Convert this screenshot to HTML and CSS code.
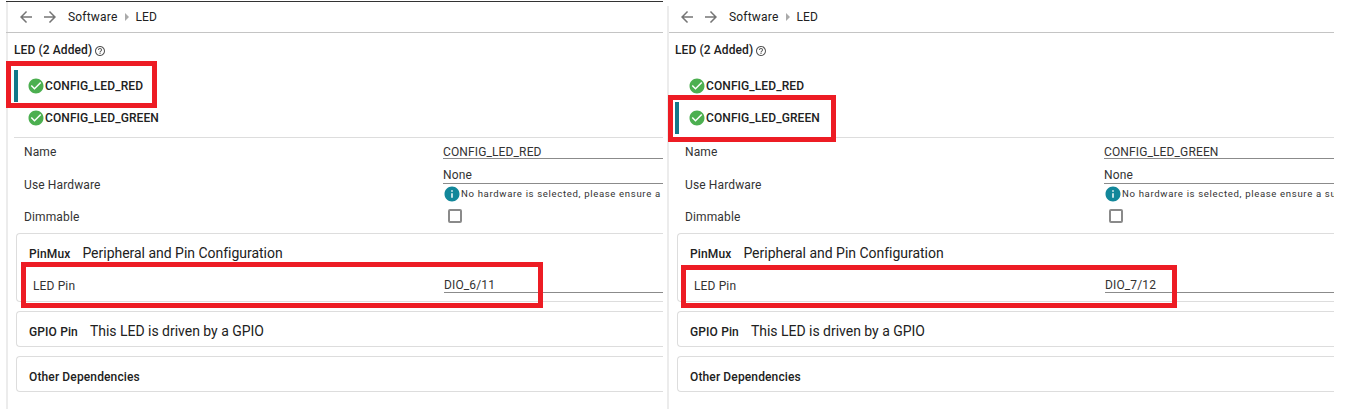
FILE: index.html
```html
<!DOCTYPE html>
<html lang="en">
<head>
<meta charset="utf-8">
<title>LED configuration</title>
<link rel="stylesheet" href="styles.css">
</head>
<body>
<svg class="defs" width="0" height="0">
  <symbol id="back" viewBox="0 0 24 24"><path d="M20 11H7.83l5.59-5.59L12 4l-8 8 8 8 1.41-1.41L7.83 13H20v-2z"/></symbol>
  <symbol id="forward" viewBox="0 0 24 24"><path d="M12 4l-1.41 1.41L16.17 11H4v2h12.17l-5.58 5.59L12 20l8-8z"/></symbol>
  <symbol id="help" viewBox="0 0 24 24"><path d="M11 18h2v-2h-2v2zm1-16C6.48 2 2 6.48 2 12s4.48 10 10 10 10-4.48 10-10S17.52 2 12 2zm0 18c-4.41 0-8-3.59-8-8s3.59-8 8-8 8 3.590 8 8-3.590 8-8 8zm0-14c-2.210 0-4 1.790-4 4h2c0-1.100.9-2 2-2s2 .9 2 2c0 2-3 1.750-3 5h2c0-2.250 3-2.500 3-5 0-2.210-1.790-4-4-4z"/></symbol>
  <symbol id="check" viewBox="0 0 24 24"><path d="M12 2C6.480 2 2 6.480 2 12s4.480 10 10 10 10-4.480 10-10S17.520 2 12 2zm-2 15l-5-5 1.410-1.410L10 14.170l7.590-7.590L19 8l-9 9z"/></symbol>
  <symbol id="info" viewBox="0 0 24 24"><path d="M12 2C6.480 2 2 6.480 2 12s4.480 10 10 10 10-4.480 10-10S17.520 2 12 2zm1 15h-2v-6h2v6zm0-8h-2V7h2v2z"/></symbol>
</svg>
<main class="board">
  <section class="panel panel-left">
    <header class="crumbs">
      <svg class="arrow"><use href="#back"/></svg><svg class="arrow"><use href="#forward"/></svg>
      <span class="crumb">Software</span><i class="sep"></i><span>LED</span>
    </header>
    <h1 class="title"><span>LED (2 Added)</span><svg class="help"><use href="#help"/></svg></h1>
    <ul class="instances">
      <li class="instance selected"><svg class="check"><use href="#check"/></svg><span>CONFIG_LED_RED</span></li>
      <li class="instance"><svg class="check"><use href="#check"/></svg><span>CONFIG_LED_GREEN</span></li>
    </ul>
    <div class="form">
      <div class="row row-name"><label>Name</label><div class="field">CONFIG_LED_RED</div></div>
      <div class="row row-hw"><label>Use Hardware</label><div class="stack"><div class="field">None</div><div class="note"><svg class="info"><use href="#info"/></svg><span>No hardware is selected, please ensure a</span></div></div></div>
      <div class="row row-dim"><label>Dimmable</label><span class="box"></span></div>
    </div>
    <div class="cards">
      <article class="card card-pin"><div class="head"><b>PinMux</b><span class="desc">Peripheral and Pin Configuration</span></div>
        <div class="pin"><label>LED Pin</label><div class="field">DIO_6/11</div></div></article>
      <article class="card"><div class="head"><b>GPIO Pin</b><span class="desc">This LED is driven by a GPIO</span></div></article>
      <article class="card"><div class="head"><b>Other Dependencies</b></div></article>
    </div>
  </section>
  <section class="panel panel-right">
    <header class="crumbs">
      <svg class="arrow"><use href="#back"/></svg><svg class="arrow"><use href="#forward"/></svg>
      <span class="crumb">Software</span><i class="sep"></i><span>LED</span>
    </header>
    <h1 class="title"><span>LED (2 Added)</span><svg class="help"><use href="#help"/></svg></h1>
    <ul class="instances">
      <li class="instance"><svg class="check"><use href="#check"/></svg><span>CONFIG_LED_RED</span></li>
      <li class="instance selected"><svg class="check"><use href="#check"/></svg><span>CONFIG_LED_GREEN</span></li>
    </ul>
    <div class="form">
      <div class="row row-name"><label>Name</label><div class="field">CONFIG_LED_GREEN</div></div>
      <div class="row row-hw"><label>Use Hardware</label><div class="stack"><div class="field">None</div><div class="note"><svg class="info"><use href="#info"/></svg><span>No hardware is selected, please ensure a su</span></div></div></div>
      <div class="row row-dim"><label>Dimmable</label><span class="box"></span></div>
    </div>
    <div class="cards">
      <article class="card card-pin"><div class="head"><b>PinMux</b><span class="desc">Peripheral and Pin Configuration</span></div>
        <div class="pin"><label>LED Pin</label><div class="field">DIO_7/12</div></div></article>
      <article class="card"><div class="head"><b>GPIO Pin</b><span class="desc">This LED is driven by a GPIO</span></div></article>
      <article class="card"><div class="head"><b>Other Dependencies</b></div></article>
    </div>
  </section>
  <div class="mark mark-red"></div>
  <div class="mark mark-pin6"></div>
  <div class="mark mark-green"></div>
  <div class="mark mark-pin7"></div>
</main>
</body>
</html>
```
FILE: styles.css
```css
* { box-sizing: border-box; }
body { margin: 0; background: #fff; color: #212121; font: 12px/16px Roboto, sans-serif; letter-spacing: .13px; }
svg { display: block; flex: none; fill: currentColor; }
.defs { position: absolute; }
.board { position: relative; display: flex; gap: 4px; height: 419px; padding-left: 6px; overflow: hidden; }
.panel { height: 409px; padding-left: 2px; overflow: hidden; background: linear-gradient(#ececec, #ececec) 0 6px / 2px 100% no-repeat; white-space: nowrap; }
.panel-left { width: 657px; border-top: 1px solid #fff; background-position: 0 0; }
.panel-left .crumbs { height: 32px; margin-left: -2px; padding: 0 0 0 11px; border-top: 1px solid #333; }
.panel-right { width: 667px; }
.crumbs { display: flex; align-items: center; height: 33px; padding: 1px 0 0 9px; border-bottom: 1px solid #c4c4c4; }
.arrow { width: 18px; height: 18px; margin-right: 6px; color: #757575; }
.crumb { margin-left: 3px; letter-spacing: .2px; }
.sep { margin: 0 7px; border: 4px solid transparent; border-left-color: #aaa; border-right: 0; }
.title { display: flex; align-items: center; height: 37px; margin: 0; padding: 0 0 3px 6px; font-size: 12px; font-weight: 500; letter-spacing: .1px; }
.help { width: 12px; height: 12px; margin: 2px 0 0 2px; color: #555; }
.instances { margin: 0 0 0 6px; padding: 0 0 3px; list-style: none; border-bottom: 1px solid #ddd; }
.instance { display: flex; align-items: center; height: 32px; padding-left: 9px; border-left: 4px solid transparent; font-weight: 500; letter-spacing: .09px; }
.instance.selected { border-left-color: #12788a; }
.check { width: 18px; height: 18px; color: #4caf50; }
.form { padding-left: 16px; color: #333; }
.row { display: grid; grid-template-columns: 419px 1fr; align-items: center; }
.field { border-bottom: 1px solid #8b8b8b; }
.row-name { height: 28px; }
.row-name .field { height: 15px; line-height: 16px; margin-top: -1px; }
.row-hw { height: 37px; }
.row-hw .field { height: 17px; }
.row-hw .stack { height: 35px; }
.note { display: flex; align-items: center; height: 20px; font-size: 9.6px; letter-spacing: .65px; overflow: hidden; }
.info { width: 18px; height: 18px; color: #12879a; }
.row-dim { height: 28px; }
.box { width: 14px; height: 14px; margin: -1px 0 0 5px; border: 2px solid #8a8a8a; border-radius: 2px; }
.row-dim .box { align-self: start; margin-top: 6px; }
.cards { display: flex; flex-direction: column; gap: 9px; padding: 2px 0 0 8px; }
.card { height: 36px; border: 1px solid #ddd; border-right: 0; border-radius: 4px 0 0 4px; }
.card-pin { height: 69px; }
.head { display: flex; align-items: center; height: 34px; padding: 5px 0 0 12px; }
.head b { font-weight: 500; }
.desc { margin: -2px 0 0 12px; font-size: 14px; letter-spacing: -.02px; }
.pin { display: grid; grid-template-columns: 411px 1fr; align-items: start; padding-left: 16px; color: #333; }
.pin label { padding-top: 10px; }
.pin .field { height: 17px; margin-top: 8px; line-height: 18px; }
.mark { position: absolute; border: 5px solid #ed1c24; }
.mark-red { left: 6px; top: 61px; width: 151px; height: 47px; }
.mark-pin6 { left: 21px; top: 262px; width: 522px; height: 46px; }
.mark-green { left: 668px; top: 95px; width: 168px; height: 47px; }
.mark-pin7 { left: 681px; top: 265px; width: 496px; height: 43px; }
```
